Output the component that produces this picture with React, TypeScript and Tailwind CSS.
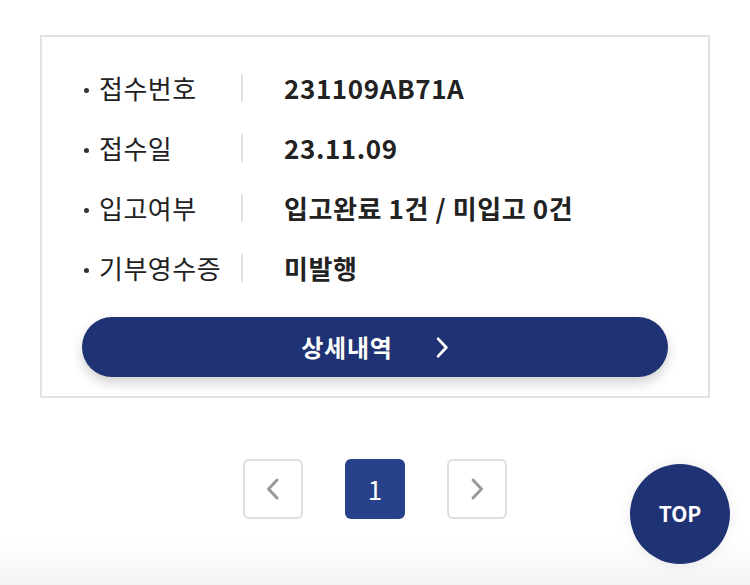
import React from "react";

const rows = [
  { label: "접수번호", value: "231109AB71A" },
  { label: "접수일", value: "23.11.09" },
  { label: "입고여부", value: "입고완료 1건 / 미입고 0건" },
  { label: "기부영수증", value: "미발행" },
];

function Chevron({ dir, className }: { dir: "left" | "right"; className?: string }) {
  return (
    <svg viewBox="0 0 14 24" className={className} fill="none" stroke="currentColor" strokeWidth={3} strokeLinecap="round" strokeLinejoin="round">
      {dir === "right" ? <path d="M3 3l8.5 9L3 21" /> : <path d="M11 3l-8.5 9L11 21" />}
    </svg>
  );
}

export default function App() {
  return (
    <div className="relative flex min-h-[585px] flex-col bg-white font-['Noto_Sans_CJK_KR','Noto_Sans',sans-serif] text-[#222]">
      <div className="mx-auto mt-[35px] w-[670px] border-2 border-[#e2e2e2] px-[40px] pt-[21px] pb-[19px]">
        {rows.map((r) => (
          <div key={r.label} className="flex h-[60px] items-center">
            <div className="flex w-[159px] items-center gap-[10px] text-[26px] leading-none tracking-[0.5px]">
              <span className="mt-[5px] ml-[2px] h-[5px] w-[5px] rounded-full bg-[#333]" />
              <span>{r.label}</span>
            </div>
            <div className="h-[28px] w-[2px] bg-[#e3e3e3]" />
            <div className="pl-[41px] text-[26px] font-bold leading-none tracking-[0.6px]">{r.value}</div>
          </div>
        ))}
        <button className="mt-[19px] flex h-[60px] w-full items-center justify-center gap-[42px] rounded-full bg-[#1f3273] text-white shadow-[0_6px_12px_rgba(0,0,0,0.18)]">
          <span className="text-[24px] font-bold leading-none tracking-[0.8px]">상세내역</span>
          <Chevron dir="right" className="h-[23px] w-[14px]" />
        </button>
      </div>

      <div className="mt-[61px] flex justify-center gap-[42px]">
        <button className="flex h-[60px] w-[60px] items-center justify-center rounded-[6px] border-2 border-[#dedede] text-[#999]">
          <Chevron dir="left" className="h-[24px] w-[14px]" />
        </button>
        <button className="flex h-[60px] w-[60px] items-center justify-center rounded-[6px] bg-[#27428a] text-[26px] leading-none text-white">
          1
        </button>
        <button className="flex h-[60px] w-[60px] items-center justify-center rounded-[6px] border-2 border-[#dedede] text-[#999]">
          <Chevron dir="right" className="h-[24px] w-[14px]" />
        </button>
      </div>

      <div className="mt-auto h-[45px] bg-gradient-to-b from-white to-[#f3f3f3]" />

      <button className="absolute right-[20px] bottom-[21px] flex h-[100px] w-[100px] items-center justify-center rounded-full bg-[#1f3273] text-[21px] font-bold text-white shadow-[0_0_14px_rgba(0,0,0,0.08)]">
        TOP
      </button>
    </div>
  );
}
